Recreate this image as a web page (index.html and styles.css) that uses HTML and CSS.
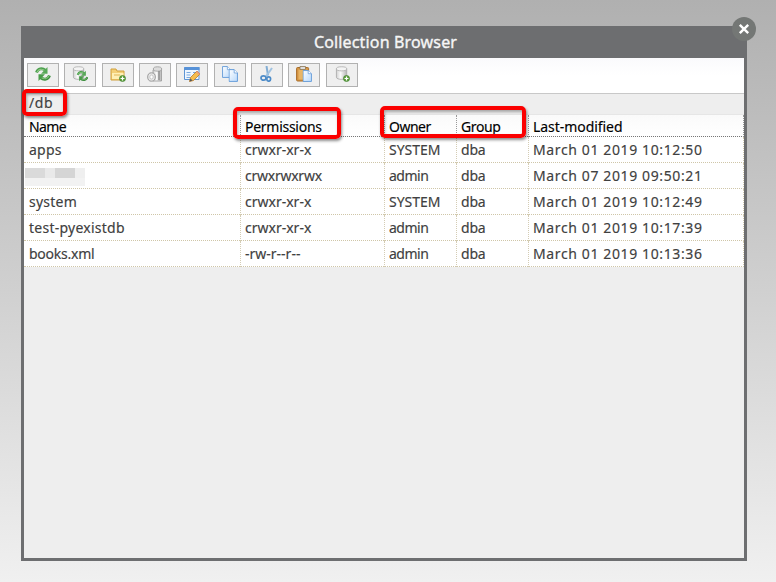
FILE: index.html
```html
<!DOCTYPE html>
<html lang="en">
<head>
<meta charset="utf-8">
<title>Collection Browser</title>
<link rel="stylesheet" href="styles.css">
</head>
<body>
<svg class="defs" width="0" height="0" aria-hidden="true">
  <defs>
    <linearGradient id="metal"><stop offset="0" stop-color="#d2d2d2"/><stop offset=".4" stop-color="#fafafa"/><stop offset="1" stop-color="#b5b5b5"/></linearGradient>
    <linearGradient id="paper" x1="0" y1="0" x2="1" y2="1"><stop offset="0" stop-color="#fff"/><stop offset="1" stop-color="#b9d9fb"/></linearGradient>
    <symbol id="arrows" viewBox="0 0 16 16">
      <path d="M1.500 6.500C3 2.500 7 1.500 10.500 4.500" fill="none" stroke="#4c9f4d" stroke-width="3"/>
      <path d="M2.200 6C3.500 3 7 2.200 10 4.800" fill="none" stroke="#92cb88" stroke-width="1.200"/>
      <path d="M12.500 1v6.700H6z" fill="#58a858"/>
      <path d="M14.500 9.500c-1.500 4-5.500 5-9 2" fill="none" stroke="#3f9040" stroke-width="3"/>
      <path d="M13.800 10c-1.300 3-4.800 3.800-7.800 1.200" fill="none" stroke="#83c17a" stroke-width="1.200"/>
      <path d="M3.500 15V8.300H10z" fill="#489b49"/>
    </symbol>
    <symbol id="cylinder" viewBox="0 0 16 16">
      <path d="M1.500 3v9c0 3 11 3 11 0V3z" fill="url(#metal)" stroke="#aaa" stroke-width=".9"/>
      <ellipse cx="7" cy="3" rx="5.500" ry="2.200" fill="#f4f4f4" stroke="#b0b0b0" stroke-width=".9"/>
    </symbol>
    <symbol id="plus" viewBox="0 0 8 8">
      <circle cx="4" cy="4" r="3.500" fill="#5b9e3b" stroke="#3d7e2b" stroke-width=".7"/>
      <path d="M4 1.800v4.400M1.800 4h4.400" stroke="#fff" stroke-width="1.400"/>
    </symbol>
    <symbol id="sheet" viewBox="0 0 10 13" preserveAspectRatio="none">
      <path d="M.6.600H6L9.400 4v8.400H.6z" fill="url(#paper)" stroke="#649bd9"/>
      <path d="M6 .6V4h3.400" fill="#fff" stroke="#649bd9" stroke-width=".8"/>
    </symbol>
  </defs>
</svg>
<main class="dialog">
  <h1 class="title">Collection Browser</h1>
  <button class="close" aria-label="Close"><svg viewBox="0 0 10 10"><path d="M1.500 1.500l7 7M8.500 1.500l-7 7"/></svg></button>
  <div class="toolbar">
    <button class="tool"><svg viewBox="0 0 16 16"><use href="#arrows" width="16" height="16"/></svg></button>
    <button class="tool"><svg viewBox="0 0 16 16"><use href="#cylinder" width="15" height="15"/><use href="#arrows" x="4.500" y="4" width="12" height="12"/></svg></button>
    <button class="tool"><svg viewBox="0 0 16 16"><path d="M1 14V3h5l1 2h7v9z" fill="#f4d078" stroke="#d0a03d"/><path d="M2 7h11.500v6H2z" fill="#fff0b5"/><path d="M4 9h6" stroke="#e0b457"/><use href="#plus" x="9" y="9" width="7" height="7"/></svg></button>
    <button class="tool"><svg viewBox="0 0 16 16"><path d="M6 4v11h8.500V4z" fill="url(#metal)" stroke="#999" stroke-width=".8"/><ellipse cx="10.500" cy="3" rx="4.200" ry="2.200" fill="#ddd" stroke="#999" stroke-width=".8"/><path d="M12 5v9" stroke="#8e8e8e" stroke-width="1.500"/><ellipse cx="4.500" cy="11" rx="3.800" ry="4.200" fill="#e7e7e7" stroke="#999"/><ellipse cx="4.500" cy="11" rx="1.700" ry="2" fill="#fff" stroke="#b4b4b4" stroke-width=".7"/></svg></button>
    <button class="tool"><svg viewBox="0 0 16 16"><path d="M.5 1.500h14.500v12H.5z" fill="#eef6ff" stroke="#5d94d4"/><path d="M.5 1h15v3H.5z" fill="#5792d8"/><path d="M2.500 6.500h4M2.500 9h4M2.500 11.500h4M9 6.500h5" stroke="#79a9df"/><path d="M5.500 15.500l1-4L13 5l3 3-6.500 6.500z" fill="#f5bd4d" stroke="#b87b2c" stroke-width=".8"/><path d="M12 6l3 3 1-1-3-3z" fill="#e99787"/><path d="M5.500 15.500l1-3 2 2z" fill="#555"/></svg></button>
    <button class="tool"><svg viewBox="0 0 16 16"><use href="#sheet" x="0" y="0" width="9" height="12"/><use href="#sheet" x="6.500" y="3" width="9.500" height="13"/></svg></button>
    <button class="tool"><svg viewBox="0 0 16 16"><path d="M7.500 0L9 9.500" stroke="#82add4" stroke-width="2"/><path d="M13 2L7 10.500" stroke="#9fc2e1" stroke-width="2"/><ellipse cx="4.500" cy="12" rx="2.500" ry="2.200" fill="none" stroke="#4c8bc8" stroke-width="1.700"/><ellipse cx="9.700" cy="13" rx="1.900" ry="2.200" fill="none" stroke="#4c8bc8" stroke-width="1.700"/></svg></button>
    <button class="tool"><svg viewBox="0 0 16 16"><rect x=".6" y="1.500" width="12" height="13.500" rx="1" fill="#d59646" stroke="#a86c27"/><path d="M2.500 3.500h8v10h-8z" fill="#e9b565"/><path d="M4 .5h5.500v3H4z" fill="#ddd" stroke="#8b7654" stroke-width=".8"/><use href="#sheet" x="6.500" y="4" width="9.500" height="12"/></svg></button>
    <button class="tool"><svg viewBox="0 0 16 16"><use href="#cylinder" x="1" width="15" height="15"/><use href="#plus" x="9" y="9" width="7" height="7"/></svg></button>
  </div>
  <div class="path"><span>/db</span></div>
  <div class="grid">
    <div class="row head"><span class="name">Name</span><span class="perm">Permissions</span><span class="owner">Owner</span><span class="group">Group</span><span class="date">Last-modified</span></div>
    <div class="row"><span class="name">apps</span><span class="perm">crwxr-xr-x</span><span class="owner">SYSTEM</span><span class="group">dba</span><span class="date">March 01 2019 10:12:50</span></div>
    <div class="row"><span class="name"><i class="mosaic"><b></b><b></b><b></b><b></b><b></b><b></b><b></b><b></b></i></span><span class="perm tight">crwxrwxrwx</span><span class="owner tighter">admin</span><span class="group">dba</span><span class="date">March 07 2019 09:50:21</span></div>
    <div class="row"><span class="name">system</span><span class="perm">crwxr-xr-x</span><span class="owner">SYSTEM</span><span class="group">dba</span><span class="date">March 01 2019 10:12:49</span></div>
    <div class="row"><span class="name">test-pyexistdb</span><span class="perm">crwxr-xr-x</span><span class="owner tighter">admin</span><span class="group">dba</span><span class="date">March 01 2019 10:17:39</span></div>
    <div class="row"><span class="name tight">books.xml</span><span class="perm">-rw-r--r--</span><span class="owner tighter">admin</span><span class="group">dba</span><span class="date">March 01 2019 10:13:36</span></div>
  </div>
</main>
<div class="mark mark-path"></div>
<div class="mark mark-perm"></div>
<div class="mark mark-owner"></div>
</body>
</html>
```
FILE: styles.css
```css
* { box-sizing: border-box; }
body {
  margin: 0;
  height: 582px;
  padding: 26px 29px 21px 21px;
  overflow: hidden;
  background: linear-gradient(#b0b0b0, #f0f0f0);
  font-family: "Noto Sans", sans-serif;
  font-size: 14px;
  color: #404040;
  -webkit-text-stroke: .15px currentColor;
}
.defs { position: absolute; }
.dialog {
  position: relative;
  height: 535px;
  border: 3px solid #6d6e70;
  border-top: 0;
  background: #eee;
}
.title {
  margin: 0;
  height: 32px;
  padding-left: 3px;
  background: #6d6e70;
  color: #f6f6f6;
  font-size: 16px;
  font-weight: 400;
  letter-spacing: .16px;
  line-height: 33px;
  text-align: center;
  -webkit-text-stroke: .35px currentColor;
}
.close {
  position: absolute;
  top: -9px;
  right: -12px;
  width: 24px;
  height: 24px;
  padding: 0;
  display: grid;
  place-items: center;
  border: 0;
  border-radius: 50%;
  background: #747775;
}
.close svg { width: 12px; height: 12px; stroke: #fff; stroke-width: 2; }
.toolbar {
  display: flex;
  gap: 5.375px;
  height: 36px;
  padding: 5px 0 0 2.85px;
  border-bottom: 1px solid #c8c8c8;
  background: linear-gradient(#fafafc, #fff 50%);
}
.tool {
  width: 32px;
  height: 24px;
  flex: none;
  padding: 0 0 3px 7px;
  border: 1px solid #b1b1b1;
  background: #efefef;
  text-align: left;
}
.tool svg { display: block; width: 16px; height: 16px; }
.path { height: 20px; padding-left: 5px; line-height: 18px; letter-spacing: .6px; }
.grid { border-top: 1px solid #e6e6e6; background: #fff; }
.row {
  display: grid;
  grid-template-columns: 217px 144px 72px 72px 215px;
  height: 26px;
  border-bottom: 1px dotted #cfc6a8;
  line-height: 26px;
  white-space: nowrap;
}
.row > span { padding-left: 4px; border-right: 1px dotted #d4ccb4; }
.row > .name { padding-left: 5px; letter-spacing: .25px; }
.row > .date { letter-spacing: .62px; }
.row > .group { letter-spacing: -.2px; }
.row > .tight { letter-spacing: -.25px; }
.row > .tighter { letter-spacing: -.5px; }
.head {
  height: 22px;
  border-bottom-color: #777;
  background: linear-gradient(#fafafa, #fff);
  color: #000;
  line-height: 24px;
}
.head > span { border-right-color: #999; }
.row.head > .name { letter-spacing: -.65px; }
.row.head > .perm { letter-spacing: -.27px; }
.row.head > .owner { letter-spacing: -.5px; }
.row.head > .group { letter-spacing: -.4px; }
.row.head > .date { letter-spacing: -.05px; }
.mosaic {
  display: grid;
  grid-template-columns: 20px 10px 20px 10px;
  grid-template-rows: 10px 8px;
  margin: 5px 0 0 -4px;
}
.mosaic b { background: #f2f2f2; }
.mosaic b:nth-child(1) { background: #dadada; }
.mosaic b:nth-child(2) { background: #e9e9e9; }
.mosaic b:nth-child(3) { background: #d5d5d5; }
.mosaic b:nth-child(4) { background: #efefef; }
.mark {
  position: absolute;
  border: 4px solid #fb0000;
  border-radius: 5px;
  box-shadow: 1px 2px 3px rgba(0, 0, 0, .45), inset 1px 2px 3px rgba(0, 0, 0, .3);
}
.mark-path { left: 22px; top: 89px; width: 45px; height: 27px; }
.mark-perm { left: 233px; top: 107px; width: 108px; height: 32px; }
.mark-owner { left: 380px; top: 106px; width: 146px; height: 32px; }
```
